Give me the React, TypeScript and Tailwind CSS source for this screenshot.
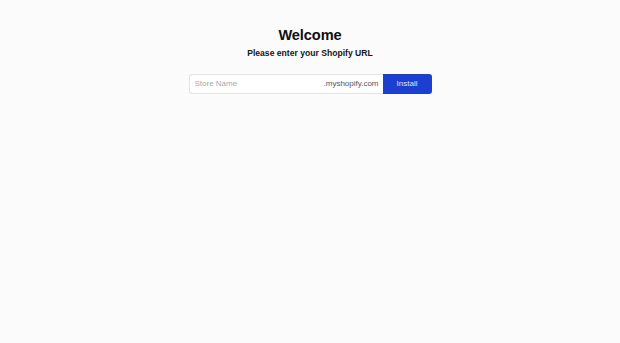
export default function App() {
  return (
    <div
      className="min-h-[343px] w-full bg-[#fbfbfb] flex flex-col items-center pt-[26px]"
      style={{ fontFamily: '"Liberation Sans", Arial, sans-serif' }}
    >
      <h1 className="text-[14.6px] leading-[18px] font-bold tracking-[-0.1px] text-[#0f0f0f]">Welcome</h1>
      <p className="mt-[3px] text-[8.6px] leading-[12px] font-bold text-[#161616]">
        Please enter your Shopify URL
      </p>
      <form className="mt-[15px] flex h-[20px] w-[243px]" onSubmit={e => e.preventDefault()}>
        <div className="flex flex-1 items-center rounded-l-[3px] border border-r-0 border-[#e3e3e3] bg-white pl-[5px] pr-[4px]">
          <input
            className="min-w-0 flex-1 bg-transparent text-[8px] text-[#333] outline-none placeholder:text-[#a8a8a8]"
            placeholder="Store Name"
          />
          <span className="text-[8px] text-[#555]">.myshopify.com</span>
        </div>
        <button
          type="submit"
          className="w-[49px] rounded-r-[3px] bg-[#1c3fd0] text-[8px] font-medium text-[#dfe6ff]"
        >
          Install
        </button>
      </form>
    </div>
  )
}
